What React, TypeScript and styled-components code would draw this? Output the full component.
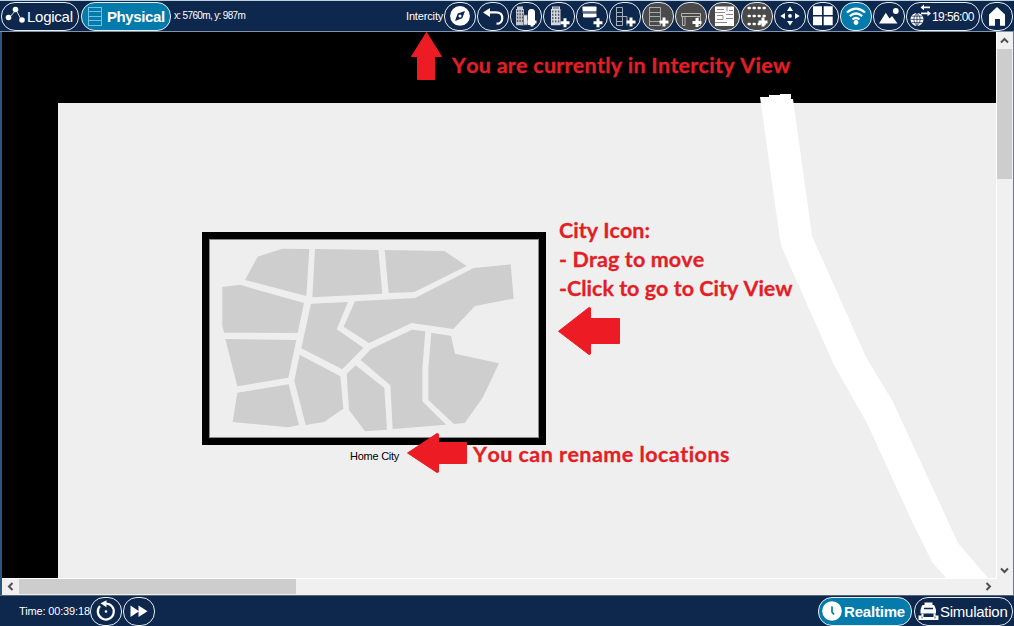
import React from 'react';
import styled, { createGlobalStyle, css } from 'styled-components';

const GlobalStyle = createGlobalStyle`
  * { box-sizing: border-box; }
  body { margin: 0; overflow: hidden; background: #0d274d; }
`;

const navy = '#0d274d';
const teal = '#047bab';
const red = '#ed1c24';

const Window = styled.div`
  width: 1014px;
  height: 626px;
  display: flex;
  flex-direction: column;
  background: ${navy};
  color: #fff;
  font-family: 'Liberation Sans', Arial, sans-serif;
  overflow: hidden;
`;

const TopBar = styled.header`
  flex: none;
  height: 32px;
  display: flex;
  align-items: flex-start;
  gap: 1px;
  padding: 1px 1px 0 1px;
  border-top: 1px solid #b9d0dd;
  border-bottom: 1px solid #8494a8;
`;

const BottomBar = styled.footer`
  flex: none;
  height: 31px;
  display: flex;
  align-items: flex-start;
  gap: 1px;
  padding: 1px 1px 0 19px;
  border-top: 1px solid #5c6573;
`;

const Spacer = styled.div`
  flex: 1;
`;

const Modes = styled.nav`
  flex: none;
  display: flex;
  gap: 2px;
`;

const Pill = styled.button<{ $w?: number; $tone?: string }>`
  flex: none;
  width: ${(p) => p.$w ?? 32}px;
  height: 29px;
  padding: 0;
  display: flex;
  align-items: center;
  border: 1px solid #e8edf3;
  border-radius: 14px;
  background: ${(p) => p.$tone ?? 'transparent'};
  color: #fff;
  font-family: inherit;
  overflow: hidden;
  svg { display: block; flex: none; }
`;

const PillText = styled.span<{ $bold?: boolean; $size?: number; $track?: number; $dy?: number }>`
  font-size: ${(p) => p.$size ?? 15}px;
  font-weight: ${(p) => (p.$bold ? 700 : 400)};
  letter-spacing: ${(p) => p.$track ?? 0}px;
  line-height: 18px;
  padding-top: ${(p) => p.$dy ?? 0}px;
  white-space: nowrap;
`;

const Status = styled.span<{ $w: number; $track?: number; $gap?: number; $size?: number }>`
  flex: none;
  width: ${(p) => p.$w}px;
  margin-left: ${(p) => p.$gap ?? 0}px;
  font-size: ${(p) => p.$size ?? 11}px;
  letter-spacing: ${(p) => p.$track ?? 0}px;
  line-height: 28px;
  white-space: nowrap;
`;

const Workspace = styled.main`
  flex: none;
  height: 563px;
  display: grid;
  grid-template-columns: 995px 16px;
  grid-template-rows: 547px 16px;
  background: #f0f0f0;
  border-left: 2px solid #2c567c;
  border-right: 1px solid #77788a;
`;

const Canvas = styled.section`
  position: relative;
  overflow: hidden;
  background: #000;
  border-right: 1px solid #fff;
  border-bottom: 1px solid #fff;
`;

const Land = styled.div`
  position: absolute;
  left: 56px;
  top: 71px;
  right: 0;
  bottom: 0;
  background: #efefef;
`;

const Overlay = styled.svg`
  position: absolute;
  left: 0;
  top: 0;
`;

const CityFrame = styled.div`
  position: absolute;
  left: 200px;
  top: 200px;
  width: 344px;
  height: 213px;
  border: 7px solid #000;
  background: #eee;
  svg { display: block; }
`;

const CityName = styled.span`
  position: absolute;
  left: 348px;
  top: 417px;
  font-size: 11px;
  line-height: 14px;
  letter-spacing: -0.25px;
  color: #000;
  white-space: nowrap;
`;

const Note = styled.p<{ $x: number; $y: number; $track?: number }>`
  position: absolute;
  left: ${(p) => p.$x}px;
  top: ${(p) => p.$y}px;
  margin: 0;
  font: 700 21.5px/29px Lato, sans-serif;
  font-kerning: none;
  font-variant-ligatures: none;
  letter-spacing: ${(p) => p.$track ?? 0}px;
  color: #e21f26;
  -webkit-text-stroke: 0.3px #e21f26;
  white-space: nowrap;
`;

const scroll = css`
  display: flex;
  align-items: flex-start;
  background: #f0f0f0;
`;

const VScroll = styled.div`
  ${scroll}
  flex-direction: column;
`;

const HScroll = styled.div`
  ${scroll}
`;

const Thumb = styled.div<{ $w: number; $h: number }>`
  flex: none;
  width: ${(p) => p.$w}px;
  height: ${(p) => p.$h}px;
  background: #cdcdcd;
`;

const ArrowBox = styled.div<{ $turn: number }>`
  width: 15px;
  height: 17px;
  flex: none;
  display: grid;
  place-items: center;
  svg { transform: rotate(${(p) => p.$turn}deg); }
`;

const ArrowBoxWide = styled(ArrowBox)`
  width: 17px;
  height: 15px;
`;

const Chevron = ({ turn, wide }: { turn: number; wide?: boolean }) => {
  const Box = wide ? ArrowBoxWide : ArrowBox;
  return (
    <Box $turn={turn}>
      <svg width="9" height="7" viewBox="0 0 9 7">
        <path d="M1 5.5 4.5 2 8 5.5" fill="none" stroke="#505050" strokeWidth="2" />
      </svg>
    </Box>
  );
};

const Glyph = ({ children, w = 30, dy = 0.6 }: { children: React.ReactNode; w?: number; dy?: number }) => (
  <svg width={w} height="27" viewBox={`0 ${dy} ${w} 27`} fill="#fff" stroke="none">
    {children}
  </svg>
);

const Plus = ({ x, y }: { x: number; y: number }) => (
  <path d={`M${x} ${y - 4.5}v9M${x - 4.5} ${y}h9`} stroke="#fff" strokeWidth="3" fill="none" />
);

const LogicalIcon = () => (
  <Glyph w={25} dy={0}>
    <path d="M7 15 14 7 20 18" fill="none" stroke="#dfe6ee" strokeWidth="1" />
    <circle cx="6.500" cy="14.500" r="2.800" />
    <circle cx="13.500" cy="6.500" r="2.800" />
    <circle cx="20" cy="17" r="2.800" />
  </Glyph>
);

const RackIcon = () => (
  <Glyph w={25} dy={0.500}>
    <path d="M6.500 5v18M19.500 5v18M6 5h14M6 9h14M6 14h14M6 18h14M6 23h14" fill="none" stroke="#6fc0e2" strokeWidth="1" />
  </Glyph>
);

const CompassIcon = () => (
  <Glyph>
    <circle cx="15" cy="13.500" r="9.900" />
    <path d="M20 8.500 17.300 15.800 10 18.500 12.700 11.200Z" fill={navy} />
    <circle cx="15" cy="13.500" r="1.500" fill="#fff" />
  </Glyph>
);

const BackIcon = () => (
  <Glyph>
    <path d="M10 10H18C22.500 10 24.300 12.500 24.300 15.500 24.300 19 22 21.300 18.500 21.300" fill="none" stroke="#fff" strokeWidth="2.200" />
    <path d="M5 10 12 5.500V14.500Z" />
  </Glyph>
);

const Windows = ({ x, y, cols, rows, step = 2.5 }: { x: number; y: number; cols: number; rows: number; step?: number }) => (
  <>
    {Array.from({ length: cols * rows }, (_, i) => (
      <rect key={i} x={x + (i % cols) * step} y={y + Math.floor(i / cols) * 3.3} width="1.400" height="2" fill="#4f5966" />
    ))}
  </>
);

const CityIcon = () => (
  <Glyph dy={0}>
    <path d="M6 3.500h6v2.500h1v16.300H5V6h1Z" fill="#c4c9d0" />
    <Windows x={5.900} y={7} cols={3} rows={4} />
    <path d="M17 22V9.500Q17 6 20 6H21Q24 6 24 9.500V22Z" />
    <path d="M12.500 12h4v10h-4z" fill="#dfe2e6" stroke="#5b6574" strokeWidth=".8" />
    <Plus x={21} y={19} />
  </Glyph>
);

const BuildingIcon = () => (
  <Glyph dy={0}>
    <path d="M8 3.500h8v2.500h.5v16.300H7V6h1Z" fill="#d6dade" />
    <path d="M9 4.500h6v1H9z" fill="#4f5966" />
    <Windows x={8.100} y={7.500} cols={3} rows={4} step={2.900} />
    <Plus x={21} y={19.700} />
  </Glyph>
);

const ClosetIcon = () => (
  <Glyph dy={0}>
    <rect x="5.500" y="3.500" width="14" height="4.500" rx=".8" />
    <rect x="5.500" y="8" width="14" height="1.800" fill="#7b8490" />
    <rect x="6" y="10.500" width="13.500" height="3.500" />
    <rect x="6.500" y="14" width="11" height="1" fill="#7b8490" />
    <Plus x={21} y={19.700} />
  </Glyph>
);

const RackAddIcon = ({ wide = false }: { wide?: boolean }) => {
  const r = wide ? 17.5 : 12.5;
  return (
    <Glyph dy={0.5}>
      <path d={`M6 5H${r}M6 10H${r}M6 14H${r}M6 19H${r}M6 23H${r}M6.500 5v18M${r} 5v18`} fill="none" stroke="#a4abb4" strokeWidth="1" />
      {!wide && <path d="M13 14h4v9" fill="none" stroke="#a4abb4" />}
      <Plus x={21} y={19.500} />
    </Glyph>
  );
};

const TableIcon = () => (
  <Glyph dy={0.500}>
    <path d="M5.500 11h19v3H5.500zM6.500 14v9H9V14M22 14v9h2.500V14" fill="none" stroke="#b6b6b6" strokeWidth="1" />
    <Plus x={21} y={20} />
  </Glyph>
);

const PlanIcon = () => (
  <Glyph dy={0.500}>
    <rect x="6" y="4" width="19" height="19.500" />
    <path d="M6 10h10M18 4v5M8 7h7M20 8h4M8 13h6v4H8M17 12h7M17 16h7M6 20h12" fill="none" stroke="#8a8a8a" strokeWidth="1" />
  </Glyph>
);

const DotsIcon = () => (
  <Glyph>
    {[0, 1, 2, 3].flatMap((c) =>
      [5.500, 13.500, 21.500].map((y) => <rect key={`${c}-${y}`} x={5.500 + c * 5} y={y - 1.200} width="3.400" height="2.600" rx="1" />),
    )}
    <Plus x={21} y={19.500} />
  </Glyph>
);

const MoveIcon = () => (
  <Glyph>
    <circle cx="15" cy="13.500" r="1.900" />
    <path d="M15 3.800 18 8.500h-6ZM15 23.200 12 18.500h6ZM5.300 13.500 10 10.500v6ZM24.700 13.500 20 16.500v-6Z" />
  </Glyph>
);

const GridIcon = () => (
  <Glyph dy={0}>
    <path d="M5 3.200h9v8.800H5ZM15.700 3.200h9v8.800h-9ZM5 13.500h9v8.800H5ZM15.700 13.500h9v8.800h-9Z" />
  </Glyph>
);

const WifiIcon = () => (
  <Glyph dy={0}>
    <path d="M6 9.500Q15 1.800 24 9.500M8.800 13.200Q15 7.800 21.200 13.200M11.500 16.500Q15 13.500 18.500 16.500" fill="none" stroke="#fff" strokeWidth="2.300" />
    <circle cx="15" cy="19.500" r="2.400" />
  </Glyph>
);

const LandscapeIcon = () => (
  <Glyph dy={0}>
    <path d="M5 20.500 11.800 9.800 15.500 15.500 18 13 23.500 20.500Z" />
    <circle cx="21.800" cy="8" r="2.900" />
  </Glyph>
);

const GlobeIcon = () => (
  <Glyph w={25}>
    <circle cx="10" cy="17" r="6.500" />
    <path d="M10 10.500v13M3.500 17h13M4.500 13.800h11M4.500 20.200h11M10 10.500Q3.500 17 10 23.500M10 10.500Q16.500 17 10 23.500" fill="none" stroke={navy} strokeWidth=".7" />
    <path d="M15 5h8M14 11h7" fill="none" stroke="#fff" strokeWidth="1.800" />
    <path d="M13.500 5l3.500-2.800v5.600ZM24 11 20.500 8.200v5.600Z" />
  </Glyph>
);

const HomeIcon = () => (
  <Glyph>
    <path d="M15 4.500 23 12V23.300H18V16.500H13V23.300H7V12Z" />
  </Glyph>
);

const ResetIcon = () => (
  <Glyph dy={0}>
    <path d="M9 8A8 8 0 1 0 14.500 5.500" fill="none" stroke="#fff" strokeWidth="2.200" />
    <path d="M9.500 5.200 15.500 2.200V9.200Z" />
    <circle cx="15" cy="13.500" r="1.300" />
  </Glyph>
);

const ForwardIcon = () => (
  <Glyph dy={0}>
    <path d="M6.500 7.500 15 13.200 6.500 19ZM14.500 7.500 23.500 13.200 14.500 19Z" />
  </Glyph>
);

const ClockIcon = () => (
  <Glyph w={25} dy={0}>
    <circle cx="13" cy="13" r="9.800" />
    <path d="M13 8.500V14L15 16.500" fill="none" stroke={teal} strokeWidth="1.700" />
  </Glyph>
);

const SimulationIcon = () => (
  <Glyph w={25} dy={0.500}>
    <path d="M9.500 5h8v2.500H19q1.500 2 2 5V16H5.500v-3.500q.5-3 2-5h2Z" />
    <path d="M9 11h9M8.500 17.500h10" stroke={navy} strokeWidth="1.500" fill="none" />
    <path d="M3.500 18h3v-2h2v3.500h10V16h2v2h3v4.500h-20Z" />
    <path d="M7 19v2M20 19v2" stroke={navy} strokeWidth=".8" />
  </Glyph>
);

const districts = [
  '150,165 188,95 262,71 343,72 334,213',
  '360,72 550,75 562,206 352,217',
  '569,75 748,78 815,123 658,201 581,204',
  '82,186 137,179 150,184 327,234 308,324 88,323 82,303',
  '91,342 304,345 280,458 127,484',
  '127,503 281,478 312,600 280,607 113,591',
  '348,236 459,231 425,313 505,368 442,433 319,370',
  '480,229 660,219 836,129 947,118 956,221 840,243 775,312 650,294 522,354 446,305',
  '314,389 436,454 445,551 387,591 332,600 298,467',
  '455,447 482,421 568,489 576,614 510,619 462,555',
  '497,405 527,373 651,314 691,319 682,430 682,529 753,599 593,612 586,481',
  '709,323 768,333 780,386 912,415 863,518 809,594 777,597 700,525 700,430',
];

const dark = '#4a4a4a';
const tools: { icon: React.ReactNode; tone?: string }[] = [
  { icon: <CompassIcon /> },
  { icon: <BackIcon /> },
  { icon: <CityIcon /> },
  { icon: <BuildingIcon /> },
  { icon: <ClosetIcon /> },
  { icon: <RackAddIcon /> },
  { icon: <RackAddIcon wide />, tone: dark },
  { icon: <TableIcon />, tone: dark },
  { icon: <PlanIcon />, tone: dark },
  { icon: <DotsIcon />, tone: dark },
  { icon: <MoveIcon /> },
  { icon: <GridIcon /> },
  { icon: <WifiIcon />, tone: teal },
  { icon: <LandscapeIcon /> },
];

export default function App() {
  return (
    <Window>
      <GlobalStyle />
      <TopBar>
        <Modes>
          <Pill $w={78}>
            <LogicalIcon />
            <PillText $dy={1} $track={-0.25}>Logical</PillText>
          </Pill>
          <Pill $w={90} $tone={teal}>
            <RackIcon />
            <PillText $bold $track={-0.4}>Physical</PillText>
          </Pill>
        </Modes>
        <Status $w={80} $gap={2} $size={10} $track={-0.65}>x: 5760m, y: 987m</Status>
        <Spacer />
        <Status $w={37} $track={-0.15}>Intercity</Status>
        {tools.map((t, i) => (
          <Pill key={i} $tone={t.tone}>{t.icon}</Pill>
        ))}
        <Pill $w={74}>
          <GlobeIcon />
          <PillText $size={12} $track={-0.6}>19:56:00</PillText>
        </Pill>
        <Pill><HomeIcon /></Pill>
      </TopBar>

      <Workspace>
        <Canvas>
          <Land />
          <Overlay width="994" height="546" viewBox="2 32 994 546">
            <path
              fill="#fff"
              d="M760 97h9v-2h11v-1h11v5h2L812 236 866 357 893 402 958 543 988 578H946L932 562 910 517 867 423 834 365 782.500 249 780 240Z"
            />
          </Overlay>
          <CityFrame>
            <svg width="330" height="199" viewBox="42 42 990 597" fill="#cecece">
              <rect x="43.500" y="43.500" width="987" height="594" fill="none" stroke="#8a8a8a" strokeWidth="3" />
              {districts.map((d) => <polygon key={d} points={d} />)}
            </svg>
          </CityFrame>
          <CityName>Home City</CityName>
          <Overlay width="994" height="546" viewBox="2 32 994 546" fill={red} stroke={red} strokeLinejoin="round">
            <path d="M426.500 32.500 441.500 56.500H434.500V79.500H417.500V56.500H411.500Z" />
            <path d="M558.500 331.300 589 307.500 590.500 308V318.500H619.500V343.500H590.500V354L589 354.500Z" />
            <path d="M407.500 453 437 433.500 438.500 434V442.500H466.500V463.500H438.500V472L437 472.500Z" />
          </Overlay>
          <Note $x={450} $y={19} $track={0.25}>You are currently in Intercity View</Note>
          <Note $x={557} $y={184}>City Icon:</Note>
          <Note $x={557} $y={213} $track={0.1}>- Drag to move</Note>
          <Note $x={557} $y={242}>-Click to go to City View</Note>
          <Note $x={471} $y={408} $track={0.46}>You can rename locations</Note>
        </Canvas>
        <VScroll>
          <Chevron turn={0} />
          <Thumb $w={15} $h={130} />
          <Spacer />
          <Chevron turn={180} />
        </VScroll>
        <HScroll>
          <Chevron turn={-90} wide />
          <Thumb $w={277} $h={15} />
          <Spacer />
          <Chevron turn={90} wide />
        </HScroll>
      </Workspace>

      <BottomBar>
        <Status $w={70} $track={-0.15}>Time: 00:39:18</Status>
        <Pill><ResetIcon /></Pill>
        <Pill><ForwardIcon /></Pill>
        <Spacer />
        <Modes>
          <Pill $w={94} $tone={teal}>
            <ClockIcon />
            <PillText $bold $track={-0.2}>Realtime</PillText>
          </Pill>
          <Pill $w={99}>
            <SimulationIcon />
            <PillText $dy={1} $track={-0.25}>Simulation</PillText>
          </Pill>
        </Modes>
      </BottomBar>
    </Window>
  );
}
